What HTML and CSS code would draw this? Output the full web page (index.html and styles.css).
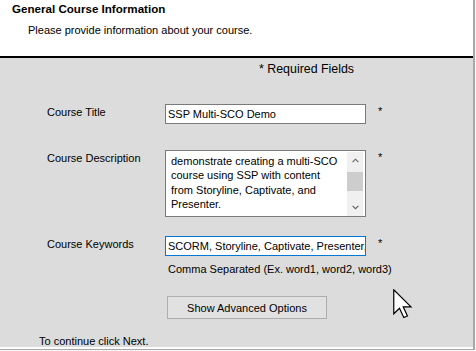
FILE: index.html
```html
<!DOCTYPE html>
<html lang="en">
<head>
    <meta charset="UTF-8">
    <title>General Course Information</title>
    <link rel="stylesheet" href="styles.css">
</head>
<body>
    <div class="frame">
        <div class="page-header">
            <h1 class="page-title">General Course Information</h1>
            <p class="page-intro">Please provide information about your course.</p>
        </div>

        <div class="page-body">
            <div class="required-note">* Required Fields</div>

            <div class="form-row row-title">
                <label class="field-label">Course Title</label>
                <div class="text-input">SSP Multi-SCO Demo</div>
                <span class="req">*</span>
            </div>

            <div class="form-row row-desc">
                <label class="field-label">Course Description</label>
                <div class="text-area">
                    <div class="text-area-content">demonstrate creating a multi-SCO course using SSP with content from Storyline, Captivate, and Presenter.</div>
                    <div class="scrollbar">
                        <svg class="scroll-arrow" width="9" height="6" viewBox="0 0 9 6"><path d="M1 5 L4.5 1.5 L8 5" fill="none" stroke="#606060" stroke-width="1.3"/></svg>
                        <div class="scroll-thumb"></div>
                        <svg class="scroll-arrow" width="9" height="6" viewBox="0 0 9 6"><path d="M1 1 L4.5 4.5 L8 1" fill="none" stroke="#606060" stroke-width="1.3"/></svg>
                    </div>
                </div>
                <span class="req">*</span>
            </div>

            <div class="form-row row-keywords">
                <label class="field-label">Course Keywords</label>
                <div class="text-input focused">SCORM, Storyline, Captivate, Presenter,</div>
                <span class="req">*</span>
            </div>
            <div class="field-hint">Comma Separated (Ex. word1, word2, word3)</div>

            <button class="adv-button">Show Advanced Options</button>

            <p class="continue-note">To continue click Next.</p>

            <svg class="mouse-cursor" width="20" height="30" viewBox="0 0 13.3 20">
                <path d="M0.5 0.5 L0.5 16.5 L4.3 12.8 L7.2 19 L9.6 18 L6.8 11.9 L12 11.9 Z" fill="#fff" stroke="#000" stroke-width="0.8" stroke-linejoin="miter"/>
            </svg>
        </div>
    </div>
</body>
</html>
```

FILE: styles.css
```css
* {
    margin: 0;
    padding: 0;
    box-sizing: border-box;
}

body {
    font-family: "Liberation Sans", Arial, sans-serif;
    font-size: 11px;
    color: #000;
    background: #f7f7f7;
    width: 476px;
    height: 351px;
    overflow: hidden;
}

.frame {
    width: 475px;
    height: 350px;
    border-right: 2px solid #a8a8a8;
    border-bottom: 1px solid #a8a8a8;
    background: #fff;
}

.page-header {
    height: 58px;
    background: #fff;
    border-bottom: 2px solid #000;
    padding-top: 2px;
}

.page-title {
    font-size: 11.6px;
    font-weight: bold;
    line-height: 14px;
    margin-left: 12px;
}

.page-intro {
    line-height: 14px;
    margin: 7px 0 0 28px;
}

.page-body {
    position: relative;
    height: 289px;
    background: #dcdcdc;
    padding-top: 4px;
}

.required-note {
    font-size: 12.4px;
    line-height: 15px;
    margin-left: 259px;
}

.form-row {
    display: grid;
    grid-template-columns: 118px 201px auto;
    align-items: start;
    padding-left: 47px;
}

.row-title {
    margin-top: 27px;
}

.row-desc {
    margin-top: 26px;
}

.row-keywords {
    margin-top: 19px;
}

.field-label {
    line-height: 14px;
    padding-top: 1px;
}

.req {
    margin-left: 12px;
    line-height: 14px;
}

.text-input {
    height: 20px;
    background: #fff;
    border: 1px solid #7a7a7a;
    padding: 2px 2px 0 2px;
    line-height: 14px;
    white-space: nowrap;
    overflow: hidden;
}

.text-input.focused {
    border-color: #0078d7;
}

.text-area {
    height: 67px;
    background: #fff;
    border: 1px solid #7a7a7a;
    display: flex;
}

.text-area-content {
    flex: 1;
    padding: 3px 5px 0 5px;
    line-height: 14.4px;
    overflow: hidden;
}

.scrollbar {
    width: 16px;
    margin: 1px 2px 0 0;
    background: #f0f0f0;
    display: flex;
    flex-direction: column;
    align-items: center;
}

.scroll-arrow {
    margin: 6px 0;
}

.scroll-thumb {
    width: 16px;
    height: 23px;
    margin: 3px 0 8px;
    background: #cdcdcd;
}

.field-hint {
    line-height: 14px;
    margin: 6px 0 0 168px;
}

.adv-button {
    display: block;
    width: 160px;
    height: 23px;
    margin: 20px 0 0 167px;
    font-family: inherit;
    font-size: 11px;
    color: #000;
    background: #e1e1e1;
    border: 1px solid #adadad;
}

.continue-note {
    line-height: 14px;
    margin: 15px 0 0 39px;
}

.mouse-cursor {
    position: absolute;
    left: 393px;
    top: 231px;
}
```
